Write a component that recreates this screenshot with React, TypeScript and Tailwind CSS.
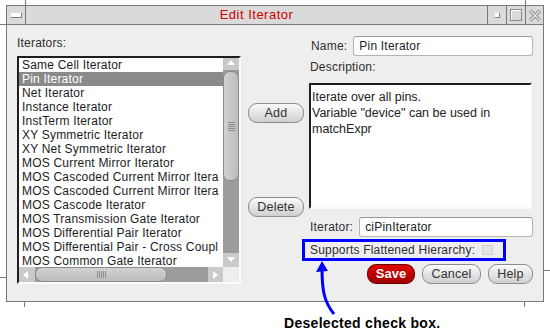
import React from "react";

const ITEMS = [
  "Same Cell Iterator",
  "Pin Iterator",
  "Net Iterator",
  "Instance Iterator",
  "InstTerm Iterator",
  "XY Symmetric Iterator",
  "XY Net Symmetric Iterator",
  "MOS Current Mirror Iterator",
  "MOS Cascoded Current Mirror Itera",
  "MOS Cascoded Current Mirror Itera",
  "MOS Cascode Iterator",
  "MOS Transmission Gate Iterator",
  "MOS Differential Pair Iterator",
  "MOS Differential Pair - Cross Coupl",
  "MOS Common Gate Iterator",
];

function Arrow({ dir }: { dir: "up" | "down" | "left" | "right" }) {
  const pts = {
    up: "1,6 5,1 9,6",
    down: "1,2 5,7 9,2",
    left: "6,1 1,5 6,9",
    right: "2,1 7,5 2,9",
  }[dir];
  return (
    <svg width="10" height="10" viewBox="0 0 10 10">
      <polygon points={pts} fill="#ffffff" />
    </svg>
  );
}

function PillButton({ label, className = "" }: { label: string; className?: string }) {
  return (
    <div
      className={`flex h-[20px] items-center justify-center rounded-[9px] border border-[#8c8c8c] bg-gradient-to-b from-[#fbfbfb] to-[#cfcfcf] text-[12.5px] tracking-[0.2px] text-[#333] ${className}`}
    >
      {label}
    </div>
  );
}

function Field({ value, className = "" }: { value: string; className?: string }) {
  return (
    <div
      className={`flex h-[20px] items-center rounded-[3px] border border-[#b4b4b4] border-t-[#9a9a9a] bg-white pl-[5px] text-[12px] tracking-[0.2px] text-[#222] ${className}`}
    >
      {value}
    </div>
  );
}

export default function App() {
  return (
    <div className="relative h-[335px] w-[550px] overflow-hidden bg-white font-['Liberation_Sans',Arial,sans-serif] text-[12px] text-[#2e2e2e]">
      {/* window */}
      <div className="ml-[6px] mt-[5px] w-[538px] border border-[#787878]">
        {/* title bar */}
        <div className="flex h-[19px] border-b border-[#787878] bg-[#dadada]">
          <div className="flex w-[19px] items-center justify-center border-r border-[#787878]">
            <div className="h-[5px] w-[11px] border-b border-r border-[#7a7a7a] bg-white" />
          </div>
          <div className="flex flex-1 items-center justify-center border-r border-[#787878] text-[13px] tracking-[0.5px] text-[#d00000]">
            Edit Iterator
          </div>
          <div className="flex w-[19px] items-center justify-center border-r border-[#787878]">
            <div className="h-[5px] w-[5px] border-b border-r border-[#808080] bg-white" />
          </div>
          <div className="flex w-[19px] items-center justify-center border-r border-[#787878]">
            <div className="h-[12px] w-[12px] border border-[#8a8a8a] shadow-[inset_1px_1px_0_#ffffff]" />
          </div>
          <div className="flex w-[17px] items-center justify-center">
            <svg width="14" height="13" viewBox="0 0 14 13">
              <path d="M2 1.5 L12 11.5 M12 1.5 L2 11.5" stroke="#8a8a8a" strokeWidth="3.2" />
              <path d="M2 1.5 L12 11.5 M12 1.5 L2 11.5" stroke="#ececec" strokeWidth="1.2" />
            </svg>
          </div>
        </div>

        {/* body */}
        <div className="flex h-[276px] bg-[#eeeeee] pl-[10px]">
          {/* left: list */}
          <div className="flex w-[224px] flex-col pt-[11px]">
            <div className="leading-[14px] tracking-[0.2px]">Iterators:</div>
            <div className="mt-[6px] h-[228px] border-2 border-b-[#fafafa] border-l-[#1e1e1e] border-r-[#fafafa] border-t-[#1e1e1e]">
              <div className="flex h-full flex-col">
                <div className="flex min-h-0 flex-1">
                  <div className="flex-1 overflow-hidden bg-white">
                    {ITEMS.map((it, i) => (
                      <div
                        key={i}
                        className={`h-[14px] whitespace-nowrap pl-[3px] leading-[14px] tracking-[0.2px] ${
                          i === 1 ? "bg-[#8a8a8a] text-white" : "text-[#1c1c1c]"
                        }`}
                      >
                        {it}
                      </div>
                    ))}
                  </div>
                  {/* vertical scrollbar */}
                  <div className="flex w-[16px] flex-col bg-[#9c9c9c]">
                    <div className="flex h-[13px] items-center justify-center border-b border-[#9a9a9a] bg-[#cacaca]">
                      <Arrow dir="up" />
                    </div>
                    <div className="flex h-[110px] items-center justify-center rounded-[7px] border border-[#8a8a8a] bg-gradient-to-r from-[#d2d2d2] to-[#bcbcbc]">
                      <div className="flex flex-col gap-[1px]">
                        {[0, 1, 2, 3, 4].map((k) => (
                          <div key={k} className="h-[1px] w-[7px] bg-[#8e8e8e]" />
                        ))}
                      </div>
                    </div>
                    <div className="flex-1" />
                    <div className="flex h-[14px] items-center justify-center bg-[#cacaca]">
                      <Arrow dir="down" />
                    </div>
                  </div>
                </div>
                {/* horizontal scrollbar */}
                <div className="flex h-[15px]">
                  <div className="flex flex-1 bg-[#9c9c9c]">
                    <div className="flex w-[16px] items-center justify-center bg-[#cacaca]">
                      <Arrow dir="left" />
                    </div>
                    <div className="flex w-[132px] items-center justify-center rounded-[7px] border border-[#8a8a8a] bg-gradient-to-b from-[#d2d2d2] to-[#bcbcbc]">
                      <div className="flex gap-[1px]">
                        {[0, 1, 2, 3, 4].map((k) => (
                          <div key={k} className="h-[7px] w-[1px] bg-[#8e8e8e]" />
                        ))}
                      </div>
                    </div>
                    <div className="flex-1" />
                    <div className="flex w-[15px] items-center justify-center bg-[#cacaca]">
                      <Arrow dir="right" />
                    </div>
                  </div>
                  <div className="w-[16px] bg-[#eeeeee]" />
                </div>
              </div>
            </div>
          </div>

          {/* middle: add / delete */}
          <div className="ml-[7px] flex w-[56px] flex-col">
            <PillButton label="Add" className="mt-[78px]" />
            <PillButton label="Delete" className="mt-[74px]" />
          </div>

          {/* right: fields */}
          <div className="ml-[5px] flex w-[224px] flex-col">
            <div className="mt-[11px] flex h-[20px] items-center">
              <span className="pl-[2px] tracking-[0.2px]">Name:</span>
              <Field value="Pin Iterator" className="ml-[6px] flex-1" />
            </div>
            <div className="mt-[4px] pl-[1px] leading-[14px] tracking-[0.2px]">Description:</div>
            <div className="mt-[9px] h-[126px] w-[223px] border-2 border-b-[#fafafa] border-l-[#1e1e1e] border-r-[#fafafa] border-t-[#1e1e1e] bg-white pl-[1px] pt-[4px] text-[12.5px] leading-[16px] text-[#222]">
              <div>Iterate over all pins.</div>
              <div>Variable "device" can be used in</div>
              <div>matchExpr</div>
            </div>
            <div className="mt-[8px] flex h-[20px] items-center">
              <span className="pl-[1px] tracking-[0.2px]">Iterator:</span>
              <Field value="ciPinIterator" className="ml-[6px] flex-1" />
            </div>
            <div className="-ml-[7px] mt-[2px] flex h-[22px] w-[204px] items-center border-[3px] border-[#0000ff] pl-[5px]">
              <span className="whitespace-nowrap tracking-[0.2px]">Supports Flattened Hierarchy:</span>
              <div className="ml-[7px] h-[10px] w-[11px] shrink-0 rounded-[1px] border border-[#cfcfcf] bg-[#e2e2e2]" />
            </div>
            <div className="mt-[3px] flex justify-end gap-[7px]">
              <div className="flex h-[20px] w-[48px] items-center justify-center rounded-[9px] border border-[#6a0000] bg-gradient-to-b from-[#e00000] to-[#a00000] text-[13px] font-bold text-white">
                Save
              </div>
              <PillButton label="Cancel" className="w-[59px]" />
              <PillButton label="Help" className="w-[45px]" />
            </div>
          </div>
        </div>
      </div>

      {/* caption */}
      <div className="ml-[284px] mt-[13px] text-[14px] font-bold leading-[16px] tracking-[0.3px] text-black">
        Deselected check box.
      </div>

      {/* window frame notches */}
      <div className="absolute left-[25px] top-0 h-[5px] w-px bg-[#787878]" />
      <div className="absolute left-[525px] top-0 h-[5px] w-px bg-[#787878]" />
      <div className="absolute left-0 top-[24px] h-px w-[6px] bg-[#787878]" />
      <div className="absolute left-0 top-[277px] h-px w-[6px] bg-[#787878]" />
      <div className="absolute left-[544px] top-[270px] h-px w-[6px] bg-[#787878]" />
      <div className="absolute left-[24px] top-[302px] h-[5px] w-px bg-[#787878]" />
      <div className="absolute left-[524px] top-[302px] h-[5px] w-px bg-[#787878]" />

      {/* annotation arrow */}
      <svg className="absolute left-[310px] top-[258px]" width="30" height="60" viewBox="0 0 30 60">
        <path d="M12 10 C12 32, 14 44, 24 56" stroke="#0000ff" strokeWidth="3" fill="none" />
        <polygon points="12,3 6,14 18,13" fill="#0000ff" />
      </svg>
    </div>
  );
}
